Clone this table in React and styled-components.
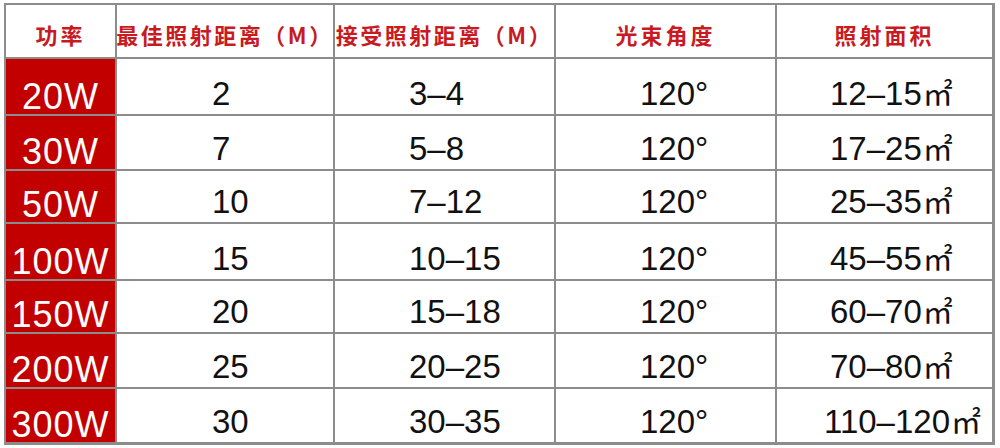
import React from "react";
import styled, { createGlobalStyle } from "styled-components";

const GlobalStyle = createGlobalStyle`
  html, body {
    margin: 0;
    padding: 0;
    background: #ffffff;
  }
  body {
    font-family: "Liberation Sans", "Noto Sans CJK SC", sans-serif;
  }
`;

const Page = styled.div`
  width: 1000px;
  height: 448px;
  padding: 3px 0 0 4px;
  box-sizing: border-box;
  background: #ffffff;
  overflow: hidden;
`;

const Sheet = styled.div`
  display: grid;
  grid-template-columns: 109px 216px 219px 219px 215px;
  grid-template-rows: ${props => props.rows};
  gap: 2px;
  width: fit-content;
  padding: 2px 3px 3px 2px;
  background: #8c8c8c;
`;

const HeadCell = styled.div`
  background: #ffffff;
  display: flex;
  align-items: center;
  justify-content: center;
  padding-top: 5px;
  box-sizing: border-box;
  color: #c81a1f;
  font-family: "Noto Sans CJK SC", "Liberation Sans", sans-serif;
  font-weight: 700;
  font-size: 22px;
  letter-spacing: ${props => props.spacing}px;
  white-space: nowrap;
`;

const PowerCell = styled.div`
  background: #c20000;
  color: #ffffff;
  display: flex;
  align-items: flex-end;
  justify-content: center;
  font-size: 36px;
  line-height: 34px;
  letter-spacing: 1px;
  padding-bottom: 0;
  box-sizing: border-box;
  white-space: nowrap;
`;

const DataCell = styled.div`
  background: #ffffff;
  color: #111111;
  display: flex;
  align-items: flex-end;
  justify-content: flex-start;
  padding-left: ${props => props.indent}px;
  padding-bottom: 4px;
  box-sizing: border-box;
  font-size: 33px;
  line-height: 32px;
  white-space: nowrap;
`;

const Area = styled.span`
  font-family: "Noto Sans CJK SC", sans-serif;
  font-size: 30px;
  position: relative;
  top: -2px;
  margin-left: 1px;
`;

const headers = [
  { label: "功率", spacing: 3 },
  { label: "最佳照射距离（M）", spacing: 2.5 },
  { label: "接受照射距离（M）", spacing: 2.5 },
  { label: "光束角度", spacing: 3 },
  { label: "照射面积", spacing: 3 },
];

const rows = [
  { power: "20W", best: "2", accept: "3–4", area: "12–15" },
  { power: "30W", best: "7", accept: "5–8", area: "17–25" },
  { power: "50W", best: "10", accept: "7–12", area: "25–35" },
  { power: "100W", best: "15", accept: "10–15", area: "45–55" },
  { power: "150W", best: "20", accept: "15–18", area: "60–70" },
  { power: "200W", best: "25", accept: "20–25", area: "70–80" },
  { power: "300W", best: "30", accept: "30–35", area: "110–120" },
];

const rowHeights = "52px 55px 53px 51px 55px 51px 53px 53px";

export default function App() {
  return (
    <>
      <GlobalStyle />
      <Page>
        <Sheet rows={rowHeights}>
          {headers.map(h => (
            <HeadCell key={h.label} spacing={h.spacing}>
              {h.label}
            </HeadCell>
          ))}
          {rows.map(r => (
            <React.Fragment key={r.power}>
              <PowerCell>{r.power}</PowerCell>
              <DataCell indent={95}>{r.best}</DataCell>
              <DataCell indent={74}>{r.accept}</DataCell>
              <DataCell indent={84}>120°</DataCell>
              <DataCell indent={r.area.length > 5 ? 47 : 53}>
                {r.area}
                <Area>㎡</Area>
              </DataCell>
            </React.Fragment>
          ))}
        </Sheet>
      </Page>
    </>
  );
}
